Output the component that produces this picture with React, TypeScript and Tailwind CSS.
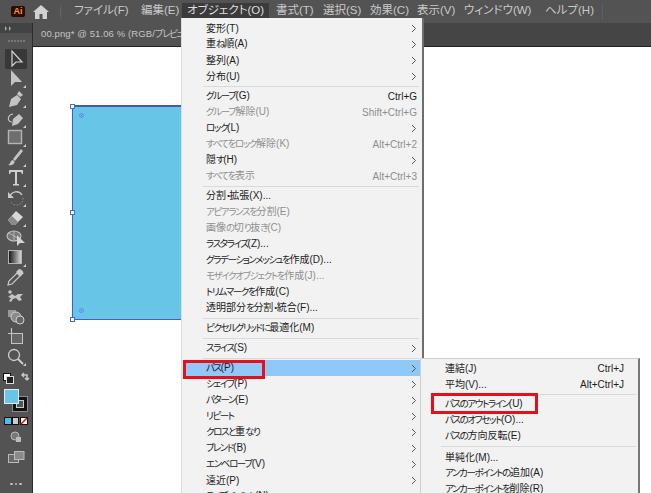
import React from 'react';

const jp = "font-['Liberation_Sans','Noto_Sans_CJK_JP',sans-serif] [font-feature-settings:'palt']";

type Row = { label?: string; keys?: string; off?: boolean; sub?: boolean; active?: boolean; sep?: boolean; wide?: boolean };

const topMenus = [
  { label: 'ファイル(F)', cls: 'w-[67px]' },
  { label: '編集(E)', cls: 'w-[46px]' },
  { label: 'オブジェクト(O)', cls: 'w-[87px] bg-[#3b3b3b] text-[#dedede]' },
  { label: '書式(T)', cls: 'w-[49px] pl-[7px]' },
  { label: '選択(S)', cls: 'w-[47px]' },
  { label: '効果(C)', cls: 'w-[47px]' },
  { label: '表示(V)', cls: 'w-[47px]' },
  { label: 'ウィンドウ(W)', cls: 'w-[81px]' },
  { label: 'ヘルプ(H)', cls: 'w-[57px]' },
];

const objectMenu: Row[] = [
  { label: '変形(T)', sub: true },
  { label: '重ね順(A)', sub: true },
  { label: '整列(A)', sub: true },
  { label: '分布(U)', sub: true },
  { sep: true },
  { label: 'グループ(G)', keys: 'Ctrl+G' },
  { label: 'グループ解除(U)', keys: 'Shift+Ctrl+G', off: true },
  { label: 'ロック(L)', sub: true },
  { label: 'すべてをロック解除(K)', keys: 'Alt+Ctrl+2', off: true },
  { label: '隠す(H)', sub: true },
  { label: 'すべてを表示', keys: 'Alt+Ctrl+3', off: true },
  { sep: true },
  { label: '分割・拡張(X)...' },
  { label: 'アピアランスを分割(E)', off: true },
  { label: '画像の切り抜き(C)', off: true },
  { label: 'ラスタライズ(Z)...' },
  { label: 'グラデーションメッシュを作成(D)...' },
  { label: 'モザイクオブジェクトを作成(J)...', off: true },
  { label: 'トリムマークを作成(C)' },
  { label: '透明部分を分割・統合(F)...' },
  { sep: true },
  { label: 'ピクセルグリッドに最適化(M)' },
  { sep: true },
  { label: 'スライス(S)', sub: true },
  { sep: true },
  { label: 'パス(P)', sub: true, active: true },
  { label: 'シェイプ(P)', sub: true },
  { label: 'パターン(E)', sub: true },
  { label: 'リピート', sub: true },
  { label: 'クロスと重なり', sub: true },
  { label: 'ブレンド(B)', sub: true },
  { label: 'エンベロープ(V)', sub: true },
  { label: '遠近(P)', sub: true },
  { label: 'ライブペイント(N)', sub: true },
];

const pathMenu: Row[] = [
  { label: '連結(J)', keys: 'Ctrl+J' },
  { label: '平均(V)...', keys: 'Alt+Ctrl+J' },
  { sep: true },
  { label: 'パスのアウトライン(U)' },
  { label: 'パスのオフセット(O)...' },
  { label: 'パスの方向反転(E)' },
  { sep: true, wide: true },
  { label: '単純化(M)...' },
  { label: 'アンカーポイントの追加(A)' },
  { label: 'アンカーポイントを削除(R)' },
];

// 元のUIフォントはかなが細いので、かなの部分だけ詰める
function Kana({ text }: { text: string }) {
  return (
    <>
      {text.split(/([\u3040-\u30ff]+)/).map((part, i) =>
        i % 2 === 1 ? (
          <span key={i} className="text-[9.500px] tracking-[-1.400px]">{part}</span>
        ) : (
          part
        )
      )}
    </>
  );
}

function Chevron() {
  return (
    <svg width="6" height="9" viewBox="0 0 6 9" className="shrink-0">
      <path d="M1 1l3.5 3.5L1 8" fill="none" stroke="#555" strokeWidth="1" />
    </svg>
  );
}

function MenuRows({ rows, sepLeft }: { rows: Row[]; sepLeft: string }) {
  return (
    <>
      {rows.map((r, i) =>
        r.sep ? (
          <div key={i} className={`${r.wide ? 'h-[5px]' : 'h-1'} flex items-center ${sepLeft}`}>
            <div className="h-px w-full bg-[#dadada]" />
          </div>
        ) : (
          <div
            key={i}
            className={`h-4 flex items-center justify-between whitespace-nowrap ${r.active ? 'bg-[#90c8f7]' : ''} ${r.off ? 'text-[#8f8f8f]' : 'text-[#1c1c1c]'}`}
          >
            <span><Kana text={r.label ?? ''} /></span>
            {r.keys && <span>{r.keys}</span>}
            {r.sub && <Chevron />}
          </div>
        )
      )}
    </>
  );
}

// ツールバーのアイコン(中心 x=11)
const toolIcons: React.ReactNode[] = [
  <path key="a" d="M7 2v15l4-4 6 0z" fill="none" stroke="#d4d4d4" strokeWidth="1.2" />,
  <path key="b" d="M6 1v16l4-4 7 0z" fill="#c4c4c4" />,
  <g key="c"><path d="M4 18l2-8 6-4 4 4-4 6z" fill="#c4c4c4" /><path d="M12 5l2-3 4 4-3 2z" fill="#c4c4c4" /></g>,
  <g key="d"><path d="M7 17l1-7 6-5 4 4-5 6z" fill="#c4c4c4" /><path d="M8 5C2 6 2 13 7 13" fill="none" stroke="#c4c4c4" strokeWidth="1.2" /></g>,
  <rect key="e" x="3.500" y="2.500" width="13" height="13" fill="#6e6e6e" stroke="#b4b4b4" strokeWidth="1.4" />,
  <g key="f"><path d="M16 1L8 11l2 2 8-10z" fill="#c4c4c4" /><path d="M8 12c-3 0-2 4-5 5 4 1 7-1 6.500-3.500z" fill="#c4c4c4" /></g>,
  <path key="g" d="M4 2h14v4h-1l-1-2h-4v12h2v1.500H8V16h2V4H6L5 6H4z" fill="#d0d0d0" />,
  <g key="h"><path d="M5 9a6.500 6.500 0 0 1 12-2" fill="none" stroke="#c8c8c8" strokeWidth="1.3" /><path d="M3 4v6h6z" fill="#c8c8c8" /><path d="M18 10a6.500 6.500 0 0 1-12 4" fill="none" stroke="#9a9a9a" strokeWidth="1" strokeDasharray="1.500 1.500" /></g>,
  <g key="i"><path d="M3 12l8-9 7 6-8 8H7z" fill="#d8d8d8" /><path d="M3 12l4 5h3l3-3-6-6z" fill="#8a8a8a" /></g>,
  <g key="j"><ellipse cx="9" cy="8" rx="7" ry="5" fill="#777" stroke="#c4c4c4" strokeWidth="1.1" /><path d="M4 5l10 6M9 3v10" stroke="#c4c4c4" strokeWidth=".8" /><path d="M12 7v11l3-3h5z" fill="#d4d4d4" /></g>,
  <g key="k"><defs><linearGradient id="gr"><stop offset="0" stopColor="#111" /><stop offset="1" stopColor="#ddd" /></linearGradient></defs><rect x="3.500" y="2.500" width="13" height="13" fill="url(#gr)" stroke="#b4b4b4" /></g>,
  <g key="l"><path d="M3 18l1-4 8-8 3 3-8 8z" fill="none" stroke="#c8c8c8" strokeWidth="1.200" /><path d="M11 5l3-3 2 .5 2 2 .5 2-3 3z" fill="#c8c8c8" /></g>,
  <g key="m"><path d="M3 10l4-3 3 2 3-2 5 0-3 3 2 3-3 1-3-3-3 1-2 3-2-1 2-3z" fill="#c4c4c4" /><circle cx="5" cy="5" r="1.800" fill="#c4c4c4" /></g>,
  <g key="n"><rect x="3" y="3" width="8" height="7" fill="#999" /><circle cx="11" cy="10" r="5" fill="#8a8a8a" stroke="#cfcfcf" /><circle cx="15" cy="13" r="4" fill="#666" stroke="#cfcfcf" /></g>,
  <g key="o"><rect x="6.500" y="6.500" width="11" height="10" fill="#666" stroke="#c4c4c4" /><path d="M6.500 1v6M3 6.500h8" stroke="#c4c4c4" strokeWidth="1.200" /></g>,
  <g key="p"><circle cx="9" cy="8" r="5.500" fill="none" stroke="#cfcfcf" strokeWidth="1.300" /><path d="M13 12l5 5" stroke="#cfcfcf" strokeWidth="1.800" /></g>,
];

const cornerTick = new Set([1, 2, 3, 4, 5, 6, 7, 8, 10, 15]);

function Toolbar() {
  return (
    <aside className="w-[33px] shrink-0 bg-[#535353] border-r border-[#2b2b2b] flex flex-col items-center">
      <div className="w-full h-[10px] bg-[#434343] flex items-center pl-[5px]">
        <svg width="7" height="5" viewBox="0 0 7 5"><path d="M0 0l2 2.500L0 5zM4 0l2 2.500L4 5z" fill="#aaa" /></svg>
      </div>
      <div className="h-4 flex items-center gap-px">
        {[0, 1, 2, 3, 4, 5].map(d => (
          <span key={d} className="w-[2px] h-[2px] bg-[#777]" />
        ))}
      </div>
      {toolIcons.map((icon, i) => (
        <div key={i} className={`w-[22px] h-[19.870px] flex items-center justify-center ${i === 0 ? 'bg-[#383838] rounded-[1px]' : ''}`}>
          <svg width="22" height="20" viewBox="0 0 22 20">
            {icon}
            {cornerTick.has(i) && <path d="M21 16v3h-3z" fill="#d0d0d0" />}
          </svg>
        </div>
      ))}
      <svg width="33" height="46" viewBox="0 0 33 46" className="mt-[1px] shrink-0">
        <rect x="3.500" y="5.500" width="7" height="7" fill="#fff" stroke="#111" />
        <rect x="6.500" y="8.500" width="7" height="7" fill="#222" stroke="#ddd" />
        <path d="M22 7h5v5M27 12l-2-2M27 12l2-2M24 5l-2 2 2 2" fill="none" stroke="#c8c8c8" strokeWidth="1.500" />
        <rect x="12.500" y="28.500" width="15" height="15" fill="#111" stroke="#ccc" strokeWidth=".6" />
        <rect x="16.500" y="32.500" width="7" height="7" fill="#555" stroke="#ccc" />
        <rect x="4.500" y="21.500" width="14" height="14" fill="#67c5e8" stroke="#e8e8e8" />
      </svg>
      <svg width="33" height="10" viewBox="0 0 33 10" className="mt-[2px] shrink-0">
        <rect x="4.500" y="1.500" width="7" height="7" fill="#48c0ea" stroke="#111" />
        <rect x="12.500" y="1.500" width="6" height="7" fill="#ccc" stroke="#111" />
        <rect x="20.500" y="1.500" width="7" height="7" fill="#fff" stroke="#111" />
        <path d="M21 8l6-6" stroke="#e01010" strokeWidth="1.600" />
      </svg>
      <svg width="33" height="14" viewBox="0 0 33 14" className="mt-[4px] shrink-0">
        <circle cx="15" cy="6" r="4" fill="#777" stroke="#bbb" />
        <rect x="16" y="7" width="5" height="5" fill="#bbb" />
      </svg>
      <svg width="33" height="14" viewBox="0 0 33 14" className="mt-[6px] shrink-0">
        <rect x="8.500" y="4.500" width="10" height="8" fill="#6a6a6a" stroke="#bbb" />
        <rect x="14.500" y="1.500" width="9.500" height="8" fill="#8a8a8a" stroke="#bbb" />
      </svg>
      <div className="mt-[19px] flex gap-[2px]">
        {[0, 1, 2].map(d => (
          <span key={d} className="w-[2.500px] h-[2.500px] rounded-full bg-[#c0c0c0]" />
        ))}
      </div>
    </aside>
  );
}

function Handle({ cls }: { cls: string }) {
  return <span className={`absolute w-[5px] h-[5px] bg-white border border-[#3f6fd0] ${cls}`} />;
}

function Widget({ cls }: { cls: string }) {
  return (
    <span className={`absolute w-[5px] h-[5px] rounded-full border border-[#6f82ee] flex items-center justify-center ${cls}`}>
      <span className="w-px h-px bg-[#4a5de0]" />
    </span>
  );
}

export default function App() {
  return (
    <div className={`relative w-[651px] h-[493px] overflow-hidden flex flex-col bg-white text-[10px] ${jp}`}>
      <header className="h-[23px] shrink-0 bg-[#535353] flex items-center text-[#c9c9c9] text-[11.500px]">
        <div className="w-[26px] flex justify-end">
          <div className="w-[14px] h-[11px] bg-[#2c0b00] rounded-[2px] flex items-center justify-center text-[9px] font-bold text-[#f59a1a] leading-none -translate-x-[1px]">Ai</div>
        </div>
        <svg width="16" height="14" viewBox="0 0 16 14" className="ml-[7px]">
          <path d="M8 0L0 7h2v7h4.500V9h3v5H14V7h2z" fill="#d2d2d2" />
        </svg>
        <div className="w-px h-[14px] bg-[#616161] ml-[11px]" />
        <nav className="flex ml-[8px] h-[16px] -translate-y-[1px]">
          {topMenus.map(m => (
            <span key={m.label} className={`flex items-center px-[5px] whitespace-nowrap ${m.cls}`}>{m.label}</span>
          ))}
        </nav>
        <div className="w-px h-[16px] bg-[#5e5e5e] ml-[5px]" />
      </header>

      <div className="flex-1 flex min-h-0">
        <Toolbar />
        <main className="flex-1 flex flex-col min-w-0">
          <div className="h-[24px] shrink-0 bg-[#454545] border-b border-[#222] flex">
            <div className="w-[148px] bg-[#535353] pl-[8px] flex items-center text-[#c4c4c4] text-[9.500px] tracking-[0.1px] whitespace-nowrap overflow-hidden">
              <span><Kana text="00.png* @ 51.06 % (RGB/プレビュー)" /></span>
            </div>
          </div>
          <div className="flex-1 relative">
            <div className="absolute left-[39px] top-[58px] w-[160px] h-[215px] bg-[#67c5e8] border border-[#3f62c0] border-t-2 border-t-[#4a58a8]">
              <Widget cls="left-[6px] top-[6px]" />
              <Widget cls="left-[6px] bottom-[6px]" />
              <Handle cls="-left-[3px] -top-[3px]" />
              <Handle cls="-left-[3px] top-[103px]" />
              <Handle cls="-left-[3px] -bottom-[3px]" />
            </div>
          </div>
        </main>
      </div>

      {/* オブジェクトメニュー */}
      <div className="absolute left-[181px] top-[18px] w-[243px] h-[480px] bg-[#f2f2f2] border-l border-[#dcdcdc] border-r-2 border-r-[#6e6e6e] pt-[2px]">
        <div className="[&>div]:pl-[23px] [&>div]:pr-[5px] pl-[1px]">
          <MenuRows rows={objectMenu} sepLeft="!pl-[20px] !pr-[3px]" />
        </div>
        <div className="absolute left-[1px] top-[342px] w-[82px] h-[19px] border-[3px] border-[#e60f1e]" />
      </div>

      {/* パスのサブメニュー */}
      <div className="absolute left-[420px] top-[358px] w-[220px] h-[140px] bg-[#f2f2f2] border border-[#cfcfcf] border-r-2 border-r-[#777] pt-[1px]">
        <div className="[&>div]:pl-[24px] [&>div]:pr-[14px]">
          <MenuRows rows={pathMenu} sepLeft="!pl-[20px] !pr-[2px]" />
        </div>
        <div className="absolute left-[10px] top-[34px] w-[107px] h-[21px] border-[3px] border-[#e60f1e]" />
      </div>
    </div>
  );
}
